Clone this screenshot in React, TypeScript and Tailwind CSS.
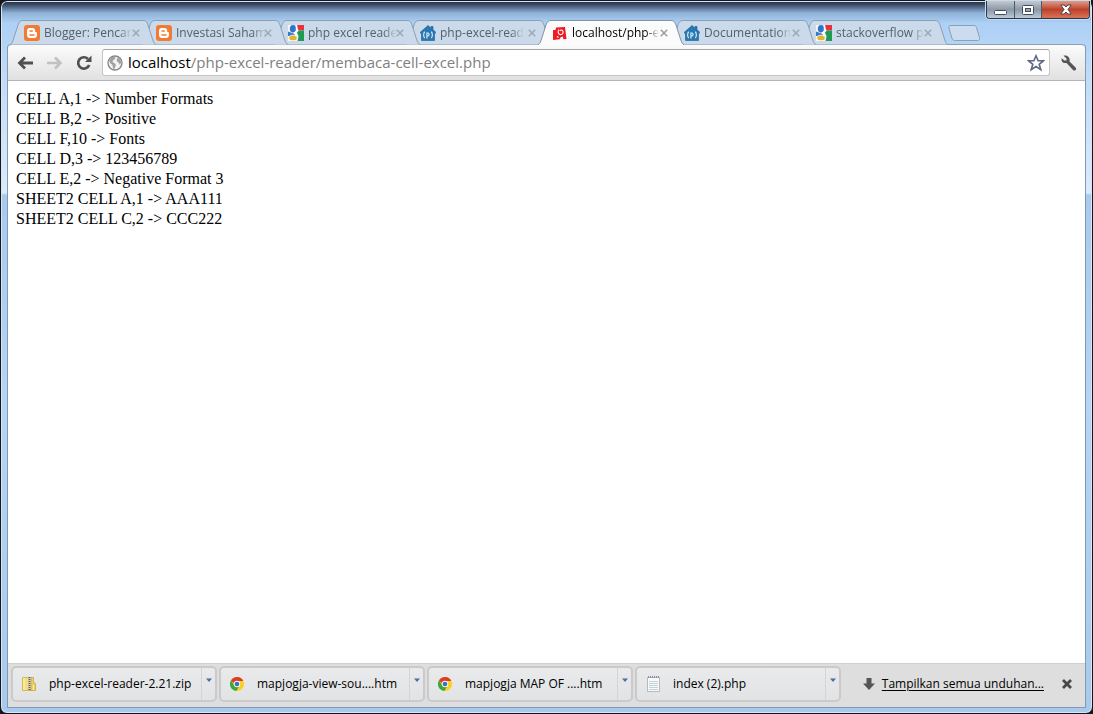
import { ReactNode } from "react";

function BloggerIcon() {
  return (
    <svg className="size-4 shrink-0" viewBox="0 0 16 16" aria-hidden="true">
      <rect width="16" height="16" rx="3" fill="#f27b31" />
      <path
        d="M5.800 3h2.600c1.700 0 2.800 1.100 2.800 2.700v.7c0 .5.3.6.8.6.6 0 1 .3 1 .9v2.200c0 1.800-1.200 2.900-3 2.900H5.900C4.100 13 3 11.900 3 10.100V5.800C3 4.100 4.100 3 5.800 3z"
        fill="#fff"
      />
      <path
        d="M6 6h2.200M6 10h4"
        stroke="#f27b31"
        strokeWidth="1.500"
        strokeLinecap="round"
      />
    </svg>
  );
}

function GoogleIcon() {
  return (
    <svg className="size-4 shrink-0" viewBox="0 0 16 16" aria-hidden="true">
      <path d="M0 0h16v16H0z" fill="#f4f7fa" />
      <path d="M8.500 0H16v5.500h-5.500z" fill="#e8323e" />
      <path d="M9 7.500 11 5.500H16V16H9.500l1-4z" fill="#219a55" />
      <path d="M0 6.500 7 9 6 11H0z" fill="#3a78c9" />
      <ellipse cx="5" cy="3.800" rx="3.200" ry="3.800" fill="#2f74cf" />
      <path
        d="M8.500 0v6L6.500 8l3 2.500-.5 3"
        stroke="#fff"
        strokeWidth="1.500"
        fill="none"
      />
      <ellipse cx="5" cy="13" rx="4.200" ry="2.800" fill="#e3b32c" stroke="#fff" strokeWidth=".8" />
    </svg>
  );
}

function PhpHouseIcon() {
  return (
    <svg className="size-4 shrink-0" viewBox="0 0 16 16" aria-hidden="true">
      <path
        d="M8 .5 11 3V1.500h2v3L16 7.500 14.500 9v6.500h-13V9L0 7.500z"
        fill="#2878b4"
        stroke="#1d5d92"
        strokeWidth=".6"
      />
      <path
        d="M4.800 6.800c-1.500 1-1.500 5.200 0 6.200M11.200 6.800c1.500 1 1.500 5.200 0 6.200M6.900 13.500v-5.500h1.100c1.400 0 1.400 3 0 3H6.900"
        stroke="#e6f2fb"
        strokeWidth="1.100"
        fill="none"
      />
    </svg>
  );
}

function LocalhostIcon() {
  return (
    <svg className="size-4 shrink-0" viewBox="0 0 16 16" aria-hidden="true">
      <path
        d="M1 5h2.500l.5-2.500 9-.5 1.500 12-3 .2-.8-2.700-2 .8-1 2-6.700.7z"
        fill="#ed1c24"
      />
      <path
        d="M7 4.500c-1.500 2-1 4.500 1 5s3.500-1 3-3-2.500-2-3-.5M5 11.500l1.500 1"
        stroke="#fff"
        strokeWidth="1.100"
        fill="none"
      />
    </svg>
  );
}

function ChromeIcon() {
  return (
    <svg className="size-4 shrink-0" viewBox="0 0 16 16" aria-hidden="true">
      <circle cx="8" cy="8" r="7" fill="#fbcf1d" />
      <path d="M1.900 4.500A7 7 0 0 1 14.300 5H8a3 3 0 0 0-2.900 2.200z" fill="#dd3b2e" />
      <path d="M1.900 4.500A7 7 0 0 0 7.300 15l3-5A3 3 0 0 1 5.400 9.500z" fill="#3ba648" />
      <circle cx="8" cy="8" r="3.200" fill="#f4f6f8" />
      <circle cx="8" cy="8" r="2.300" fill="#3772bd" />
    </svg>
  );
}

function ZipIcon() {
  return (
    <svg className="size-4 shrink-0" viewBox="0 0 16 16" aria-hidden="true">
      <path d="M1.500 1.500h9v13h-9z" fill="#f3dd83" stroke="#d5b856" />
      <path d="M10 1.500h2.500v5l2 1v7H10z" fill="#ecce67" stroke="#c9a743" strokeWidth=".8" />
      <path d="M3 2v12" stroke="#fff4b8" />
      <path d="M8.500 1v13" stroke="#4f5866" strokeWidth="2" strokeDasharray="1 1" />
      <path d="M7.500 1v12M9.500 1v12" stroke="#aeb2b5" strokeWidth=".6" />
      <path d="M12.500 9v5" stroke="#fff0a8" />
    </svg>
  );
}

function NotepadIcon() {
  return (
    <svg className="size-4 shrink-0" viewBox="0 0 16 16" aria-hidden="true">
      <path d="M2.500 1.500h12v14h-12z" fill="#f9fafb" stroke="#a9abad" strokeWidth=".8" />
      <path
        d="M4 5.500h9M4 7.500h9M4 9.500h9M4 11.500h9M4 13.500h9"
        stroke="#b5c6d1"
        strokeWidth=".8"
      />
      <path d="M3 1h12" stroke="#8d9092" strokeWidth="2" strokeDasharray="1 1" />
    </svg>
  );
}

function CrossIcon() {
  return (
    <svg className="size-2" viewBox="0 0 8 8" aria-hidden="true">
      <path d="m.8.8 6.400 6.400m0-6.400L.8 7.200" stroke="currentColor" strokeWidth="1.500" />
    </svg>
  );
}

type Tab = {
  title: string;
  icon: ReactNode;
  layer: string;
  active?: boolean;
};

// Earlier tabs lie over later ones, the active tab lies over all of them.
const tabs: Tab[] = [
  { title: "Blogger: Pencar", icon: <BloggerIcon />, layer: "z-[7]" },
  { title: "Investasi Saham", icon: <BloggerIcon />, layer: "z-[6]" },
  { title: "php excel reade", icon: <GoogleIcon />, layer: "z-[5]" },
  { title: "php-excel-read", icon: <PhpHouseIcon />, layer: "z-[4]" },
  { title: "localhost/php-e", icon: <LocalhostIcon />, layer: "z-[8]", active: true },
  { title: "Documentation", icon: <PhpHouseIcon />, layer: "z-[3]" },
  { title: "stackoverflow p", icon: <GoogleIcon />, layer: "z-[2]" },
];

const downloads = [
  { name: "php-excel-reader-2.21.zip", icon: <ZipIcon /> },
  { name: "mapjogja-view-sou....htm", icon: <ChromeIcon /> },
  { name: "mapjogja MAP OF ....htm", icon: <ChromeIcon /> },
  { name: "index (2).php", icon: <NotepadIcon /> },
];

const lines = [
  "CELL A,1 -> Number Formats",
  "CELL B,2 -> Positive",
  "CELL F,10 -> Fonts",
  "CELL D,3 -> 123456789",
  "CELL E,2 -> Negative Format 3",
  "SHEET2 CELL A,1 -> AAA111",
  "SHEET2 CELL C,2 -> CCC222",
];

function BrowserTab({ title, icon, layer, active }: Tab) {
  return (
    <div className={`-ml-[14px] grid h-[25px] w-[146px] min-w-0 ${layer}`}>
      <svg
        className="col-start-1 row-start-1 h-[25px] w-full"
        viewBox="0 0 146 25"
        preserveAspectRatio="none"
        aria-hidden="true"
      >
        <path
          d="M0 24.500C2 24 2.500 22 3.500 19L8 5C9 2 10 .5 13 .5H133C136 .5 137 2 138 5L142.500 19C143.500 22 144 24 146 24.500"
          fill={active ? "#fbfbfb" : "#cbdaea"}
          stroke={active ? "#7f93a8" : "#8d9fb2"}
        />
        {active && <path d="M1 24.500H145" stroke="#fbfbfb" />}
      </svg>
      <div className="col-start-1 row-start-1 flex min-w-0 items-center pr-4 pl-[14px]">
        <button
          type="button"
          className={`flex min-w-0 flex-1 items-center gap-1 text-left text-[12px] ${
            active ? "text-black" : "text-[#55606b]"
          }`}
        >
          {icon}
          <span className="mask-r-from-85% whitespace-nowrap">{title}</span>
        </button>
        <button
          type="button"
          aria-label={`Close ${title}`}
          className={active ? "text-[#9c9c9c]" : "text-[#9ba8b5]"}
        >
          <CrossIcon />
        </button>
      </div>
    </div>
  );
}

function WindowControls() {
  return (
    <div className="mr-[2px] flex h-[18px] overflow-hidden rounded-b-[4px] border border-t-0 border-[#27384b] shadow-[0_0_0_1px_#c9dcec]">
      <button
        type="button"
        aria-label="Minimize"
        className="flex w-7 items-center justify-center border-r border-[#4b5866] bg-linear-to-b from-[#c3c9d0] via-[#8c99a7] via-50% to-[#b9cbdc]"
      >
        <svg className="h-3 w-[13px]" viewBox="0 0 13 12" aria-hidden="true">
          <rect x=".5" y="6.500" width="12" height="4" rx="1" fill="#fff" stroke="#444b58" />
        </svg>
      </button>
      <button
        type="button"
        aria-label="Maximize"
        className="flex w-[27px] items-center justify-center border-r border-[#4b5866] bg-linear-to-b from-[#c3c9d0] via-[#8c99a7] via-50% to-[#b9cbdc]"
      >
        <svg className="h-[11px] w-3" viewBox="0 0 12 11" aria-hidden="true">
          <rect x=".5" y="1.500" width="11" height="9" rx="1" fill="#fff" stroke="#444b58" />
          <rect x="3.500" y="4.500" width="5" height="3" fill="#9ba6b1" stroke="#444b58" />
        </svg>
      </button>
      <button
        type="button"
        aria-label="Close"
        className="flex w-[47px] items-center justify-center bg-linear-to-b from-[#dd9b8e] via-[#bd4028] via-50% to-[#d8745a]"
      >
        <svg className="h-[11px] w-3" viewBox="0 0 12 11" aria-hidden="true">
          <path
            d="M.8 1h3.400L6 3l1.800-2h3.400L8 5.500l3.200 4.500H7.800L6 8l-1.800 2H.8L4 5.500z"
            fill="#fff"
            stroke="#52434b"
          />
        </svg>
      </button>
    </div>
  );
}

function Toolbar() {
  return (
    <div className="flex h-[37px] items-center rounded-t-[4px] border-t border-b border-t-[#8d9fb2] border-b-[#b3b3bd] bg-linear-to-b from-[#fbfbfb] to-[#e1e1e1] px-2">
      <button type="button" aria-label="Back" className="w-[18px] text-[#505050]">
        <svg className="h-4 w-[18px]" viewBox="0 0 18 16" aria-hidden="true">
          <path
            d="M17 8H4M9 2.500 3.500 8 9 13.500"
            stroke="currentColor"
            strokeWidth="2.800"
            fill="none"
          />
        </svg>
      </button>
      <button type="button" aria-label="Forward" className="ml-3 w-[18px] text-[#c0c0c0]">
        <svg className="h-4 w-[18px]" viewBox="0 0 18 16" aria-hidden="true">
          <path
            d="M1 8h13M9 2.500 14.500 8 9 13.500"
            stroke="currentColor"
            strokeWidth="2.500"
            fill="none"
          />
        </svg>
      </button>
      <button type="button" aria-label="Reload" className="ml-3 w-4 text-[#505050]">
        <svg className="size-4" viewBox="0 0 16 16" aria-hidden="true">
          <path
            d="M13.200 10A5.700 5.700 0 1 1 12 4"
            stroke="currentColor"
            strokeWidth="2.700"
            fill="none"
          />
          <path d="M15.500.5V7H9z" fill="currentColor" />
        </svg>
      </button>
      <div className="ml-[10px] flex h-[27px] min-w-0 flex-1 items-center rounded-[3px] border border-[#c4c4c4] border-t-[#a5a5a5] bg-white px-1">
        <svg className="size-4 shrink-0" viewBox="0 0 16 16" aria-hidden="true">
          <circle cx="8" cy="8" r="7" fill="#f3f3f3" stroke="#858585" strokeWidth="1.300" />
          <path
            d="M2 5.500 5 2l3.500-.5L8 4 6 5.500 5.500 7 8 8.500l1 1.500-1.500 3.500L6 14l-.5-4L3 8zM10.500 2.500 13 4l1.300 3-1.300 3-1.500-2.500L9.500 6z"
            fill="#a2a2a2"
          />
        </svg>
        <div
          role="textbox"
          aria-label="Address"
          tabIndex={0}
          className="ml-[5px] min-w-0 flex-1 truncate text-[15px] text-[#808080]"
        >
          <span className="text-black">localhost</span>/php-excel-reader/membaca-cell-excel.php
        </div>
        <button type="button" aria-label="Bookmark this page">
          <svg className="size-[18px]" viewBox="0 0 18 18" aria-hidden="true">
            <path
              d="m9 1.800 2.100 5h5.200L12.200 10.300l1.600 5.400L9 12.500l-4.800 3.200 1.600-5.400L1.700 6.800h5.200z"
              fill="#fff"
              stroke="#5d6986"
              strokeWidth="1.600"
            />
          </svg>
        </button>
      </div>
      <button type="button" aria-label="Settings" className="ml-[11px] w-4 text-[#555]">
        <svg className="size-4" viewBox="0 0 16 16" aria-hidden="true">
          <path
            d="M2.500.8 5.500 3.500V5.500H3.500L.5 3.300C0 6.800 2.500 8.500 5.500 8l6.500 7c1.500 1.500 4-.5 2.800-2.300L8.500 6.500C9.500 2.500 6-.2 2.500.8z"
            fill="currentColor"
          />
        </svg>
      </button>
    </div>
  );
}

function DownloadShelf() {
  return (
    <footer className="flex h-11 items-center border-t border-[#cfcfcf] bg-[#dedede] pr-[13px] pb-[3px] pl-[3px] text-[12px] text-black">
      <div className="flex min-w-0 gap-[2px]">
        {downloads.map((item) => (
          <div
            key={item.name}
            className="flex h-9 w-[206px] min-w-0 rounded-[5px] border-2 border-[#cacaca] bg-linear-to-b from-[#e9eaeb] to-[#e1e3e4]"
          >
            <button
              type="button"
              className="flex min-w-0 flex-1 items-center gap-3 pl-2 text-left whitespace-nowrap"
            >
              {item.icon}
              <span>{item.name}</span>
            </button>
            <button
              type="button"
              aria-label={`Options for ${item.name}`}
              className="flex w-[14px] justify-center border-l border-[#d3d4d5] pt-[10px]"
            >
              <svg className="h-[5px] w-[6px]" viewBox="0 0 6 5" aria-hidden="true">
                <path d="M0 .5h6L3 4z" fill="#4a6da8" />
              </svg>
            </button>
          </div>
        ))}
      </div>
      <svg className="ml-auto h-3 w-3 shrink-0" viewBox="0 0 12 12" aria-hidden="true">
        <path d="M3.500 0h5v5.500H12L6 12 0 5.500h3.500z" fill="#555" />
      </svg>
      <a href="#downloads" className="ml-[7px] whitespace-nowrap underline underline-offset-2">
        Tampilkan semua unduhan...
      </a>
      <button type="button" aria-label="Close downloads" className="ml-[18px] text-[#484848]">
        <svg className="size-[10px]" viewBox="0 0 10 10" aria-hidden="true">
          <path d="m1 1 8 8m0-8L1 9" stroke="currentColor" strokeWidth="2.800" />
        </svg>
      </button>
    </footer>
  );
}

export default function App() {
  return (
    <div className="bg-[#15171c] font-['Open_Sans','Noto_Sans',sans-serif]">
      <div className="flex min-h-screen flex-col rounded-[7px] border border-[#15171c] bg-[linear-gradient(to_bottom,#1e2738_0,#3d4f6b_4px,#8fb2d8_12px,#add0f5_22px,#c2dcf7_80px,#dceafa_192px,#a9caee_194px,#b5d4f6_400px,#a9caed_100%)] shadow-[inset_0_0_0_1px_#d5e6f7]">
        <header>
          <div className="flex h-[19px] justify-end">
            <WindowControls />
          </div>
          <div className="isolate -mb-px flex items-start pl-[23px]">
            {tabs.map((tab) => (
              <BrowserTab key={tab.title} {...tab} />
            ))}
            <button type="button" aria-label="New tab" className="pt-[5px]">
              <svg className="h-4 w-8" viewBox="0 0 32 16" aria-hidden="true">
                <path
                  d="M3 .5h22c2 0 3 .5 3.500 2l3 10c.5 2 0 3-2 3H7.500c-2 0-3-.5-3.500-2L1 3C.5 1.500 1 .5 3 .5z"
                  fill="#cbdcee"
                  stroke="#8b9fb5"
                />
              </svg>
            </button>
          </div>
        </header>
        <div className="mx-[6px] mb-[5px] flex flex-1 flex-col rounded-t-[4px] border border-t-0 border-[#8199b3]">
          <Toolbar />
          <main className="flex-1 bg-white px-2 pt-2 font-['Liberation_Serif',serif] text-[16px] leading-5 text-black">
            {lines.map((line) => (
              <p key={line}>{line}</p>
            ))}
          </main>
          <DownloadShelf />
        </div>
      </div>
    </div>
  );
}
